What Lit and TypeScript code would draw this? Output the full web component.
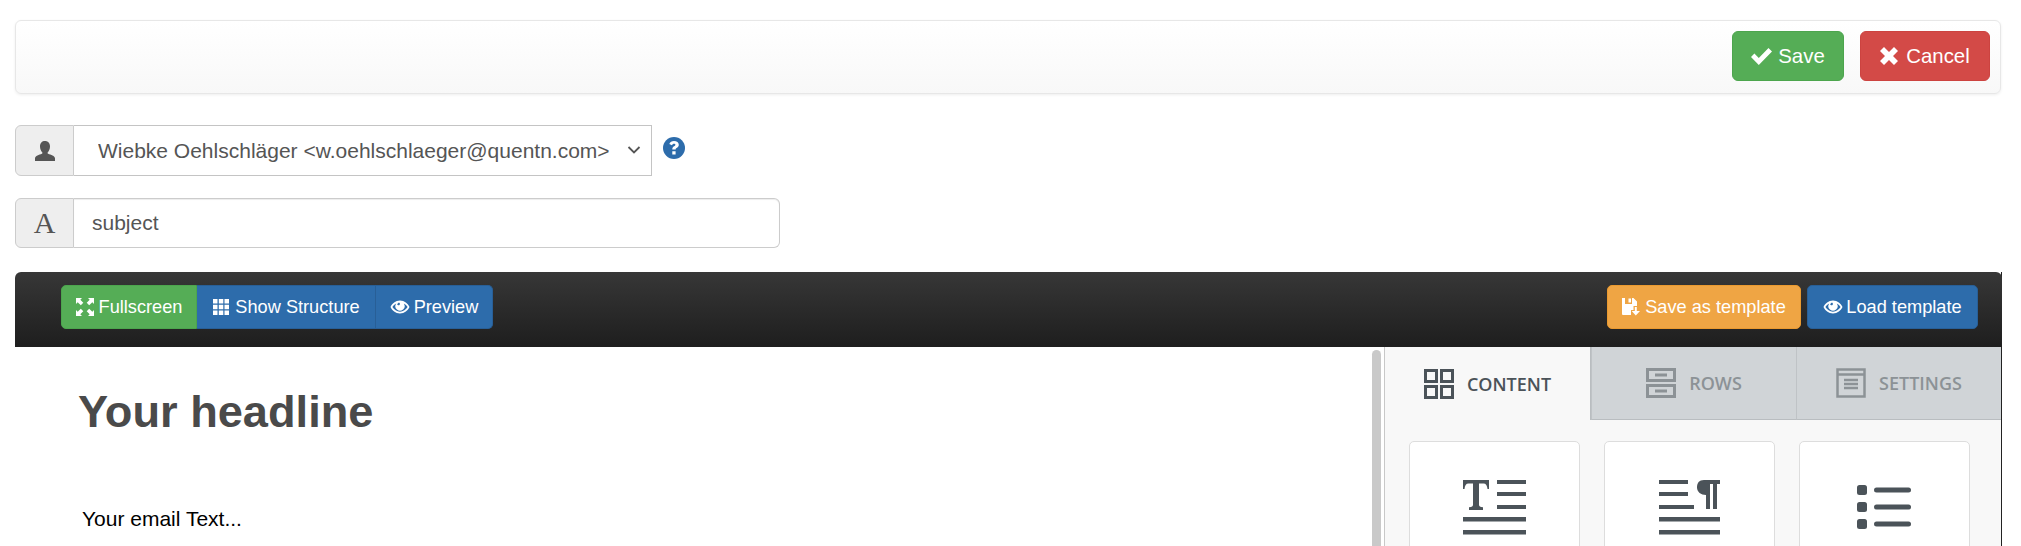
import { LitElement, html, css, svg } from "lit";
import { customElement } from "lit/decorators.js";

const eye = svg`<path fill-rule="evenodd" d="M10 3.500C5.600 3.500 2 6.600.5 10 2 13.400 5.600 16.500 10 16.500s8-3.100 9.500-6.500C18 6.600 14.400 3.500 10 3.500Zm0 11.200c-3.200 0-6-2-7.600-4.700.9-1.500 2.200-2.800 3.800-3.600A4.600 4.600 0 1 0 13.800 6.400c1.600.8 2.900 2.100 3.800 3.600-1.600 2.700-4.400 4.700-7.600 4.700Zm-1-9.100a1.400 1.400 0 1 1-1.800 1.800 3 3 0 0 1 1.800-1.800Z"/>`;

@customElement("app-root")
export class AppRoot extends LitElement {
  static styles = css`
    :host {
      display: block;
      height: 546px;
      overflow: hidden;
      background: #fff;
      font-family: "Liberation Sans", Arial, sans-serif;
      color: #555;
    }
    .page { padding: 20px 20px 0 15px; display: flex; flex-direction: column; }
    .topbar {
      height: 74px; box-sizing: border-box;
      border: 1px solid #e7e7e7; border-radius: 6px;
      background: linear-gradient(#fff, #f8f8f8);
      box-shadow: 0 1px 3px rgba(0,0,0,.07);
      display: flex; justify-content: flex-end; align-items: flex-start; gap: 16px; padding: 10px 10px 0 0;
    }
    .btn {
      box-sizing: border-box; border: 1px solid; border-radius: 6px; color: #fff;
      display: flex; align-items: center; justify-content: center; gap: 6px;
      font: 20.4px/1 "Liberation Sans", Arial, sans-serif; padding: 0;
    }
    .btn svg { fill: #fff; display: block; flex: none; }
    .big { height: 50px; }
    .save { width: 112px; background: #55ad56; border-color: #4ca54d; }
    .cancel { width: 130px; background: #d34a47; border-color: #cc4340; gap: 8px; }
    .group { display: flex; height: 51px; box-sizing: border-box; }
    .row1 { margin-top: 31px; align-items: stretch; }
    .row2 { margin-top: 22px; height: 50px; width: 765px; }
    .addon {
      width: 59px; box-sizing: border-box; flex: none;
      border: 1px solid #ccc; border-radius: 6px 0 0 6px;
      background: #eee; display: flex; align-items: center; justify-content: center; color: #555;
    }
    .addon svg { fill: #555; display: block; }
    .serif { font: 30px/1 "Liberation Serif", serif; color: #555; }
    .sel {
      width: 578px; box-sizing: border-box; appearance: none; -webkit-appearance: none; border: 1px solid #c4c4c4;
      border-left: none; border-radius: 0; background: #fff; color: #555; outline: none;
      font: 21px "Liberation Sans", Arial, sans-serif; padding: 0 0 0 24px; margin: 0;
    }
    .selwrap { position: relative; display: flex; }
    .chev { position: absolute; right: 11px; top: 20px; pointer-events: none; }
    .help { margin: 12px 0 0 11px; display: block; }
    .inp {
      flex: 1; min-width: 0; box-sizing: border-box; border: 1px solid #ccc; border-left: none; border-radius: 0 6px 6px 0;
      font: 21px "Liberation Sans", Arial, sans-serif; color: #555; padding: 0 0 0 18px; outline: none;
      box-shadow: inset 0 1px 1px rgba(0,0,0,.075); margin: 0;
    }
    .editor {
      margin-top: 24px; width: 1987px; box-sizing: border-box;
      border-right: 1px solid #222;
      height: 400px; display: flex; flex-direction: column;
    }
    .tools {
      height: 75px; flex: none; box-sizing: border-box;
      margin-right: -1px;
      border-radius: 6px 6px 0 0; background: linear-gradient(#373737, #1e1e1e);
      display: flex; justify-content: space-between; align-items: flex-start; padding: 13px 24px 0 46px;
    }
    .gr, .gr2 { display: flex; height: 44px; }
    .gr2 { gap: 6px; }
    .tb { height: 44px; font-size: 18.2px; gap: 5px; border-radius: 0; }
    .green { width: 136px; background: #55ad56; border-color: #4ca54d; border-radius: 5px 0 0 5px; }
    .blue { background: #2d6cab; border-color: #285f97; }
    .st { width: 179px; border-left: none; }
    .pv { width: 117px; border-left: none; border-radius: 0 5px 5px 0; gap: 4px; }
    .org { width: 194px; background: #efa544; border-color: #ea9a30; border-radius: 5px; }
    .lt { width: 171px; border-radius: 5px; gap: 3px; }
    .body { flex: 1; display: flex; min-height: 0; position: relative; }
    .main { flex: 1; padding: 0 0 0 63px; color: #000; min-width: 0; }
    h1 { margin: 0; padding-top: 38px; font: bold 45.2px/53px "Liberation Sans", Arial, sans-serif; color: #4a4a4a; }
    .main p { margin: 0; padding: 66px 0 0 4px; font: 21px/30px "Liberation Sans", Arial, sans-serif; color: #000; }
    .scroll { position: absolute; left: 1357px; top: 3px; bottom: 0; width: 9px; border-radius: 5px 5px 0 0; background: #c9c9c9; }
    .side { width: 617px; flex: none; box-sizing: border-box; border-left: 1px solid #c8c8c8; background: #f8f8f8; }
    .tabs { display: flex; height: 73px; }
    .tab {
      flex: 1; box-sizing: border-box; display: flex; align-items: center; justify-content: center; gap: 13px;
      font: 600 18px "Open Sans", sans-serif; color: #8c9296; background: #d0d4d7;
      border-bottom: 1px solid #b9bdc0; border-left: 1px solid #bfc3c6;
    }
    .tab svg { display: block; }
    .tab.on { color: #4b5359; background: #f8f8f8; border: none; border-right: 1px solid #b9bdc0; flex: none; width: 206px; }
    .cards { display: flex; gap: 24px; padding: 21px 0 0 24px; }
    .card {
      width: 171px; height: 120px; box-sizing: border-box; background: #fff; border: 1px solid #ddd; border-radius: 5px;
      display: flex; justify-content: center; padding-top: 36px;
    }
    .card svg { display: block; fill: #4b5359; }
  `;

  render() {
    return html`<div class="page">
      <div class="topbar">
        <button class="btn big save">
          <svg width="21" height="18" viewBox="0 0 21 18"><path d="M0 10l3.400-3.400 4.400 4.400L17.500 1 21 4.400 7.800 18z"/></svg>Save
        </button>
        <button class="btn big cancel">
          <svg width="18" height="18" viewBox="0 0 18 18"><path d="M0 4l4-4 5 5 5-5 4 4-5 5 5 5-4 4-5-5-5 5-4-4 5-5z"/></svg>Cancel
        </button>
      </div>

      <div class="group row1">
        <div class="addon">
          <svg width="22" height="22" viewBox="0 0 22 22"><path d="M11 1c3 0 5 2.200 5 5.500 0 2.400-1 4.500-2.200 5.800-.4.500-.3 1.200.3 1.500 2.700 1 6.900 2.200 6.900 4.500V21H1v-2.700c0-2.300 4.200-3.500 6.900-4.500.6-.3.700-1 .3-1.500C7 11 6 8.900 6 6.500 6 3 8 1 11 1z"/></svg>
        </div>
        <div class="selwrap">
          <select class="sel"><option>Wiebke Oehlschläger &lt;w.oehlschlaeger@quentn.com&gt;</option></select>
          <svg class="chev" width="14" height="10" viewBox="0 0 14 10"><path d="M1.500 2l5.500 5.500L12.500 2" fill="none" stroke="#555" stroke-width="1.800"/></svg>
        </div>
        <svg class="help" width="22" height="22" viewBox="0 0 22 22">
          <circle cx="11" cy="11" r="11" fill="#2d6cab"/>
          <path fill="#fff" d="M11 4c2.800 0 4.800 1.500 4.800 3.800 0 1.800-1.100 2.600-2.200 3.300-.7.400-1 .7-1 1.400H9.300c0-1.800.6-2.600 1.800-3.300.8-.5 1.300-.8 1.300-1.500 0-.6-.6-1-1.400-1-.9 0-1.600.5-2 1.500L6.300 7C7 5 8.700 4 11 4zM9.300 14.300h3.300v3.200H9.300z"/>
        </svg>
      </div>

      <div class="group row2">
        <div class="addon"><span class="serif">A</span></div>
        <input class="inp" value="subject" />
      </div>

      <div class="editor">
        <div class="tools">
          <div class="gr">
            <button class="btn tb green">
              <svg width="18" height="18" viewBox="0 0 18 18"><path d="M0 0h6L4.300 1.700 7.300 4.800 4.800 7.300 1.700 4.300 0 6zM18 0v6l-1.700-1.700-3.100 3L10.700 4.800l3-3.100L12 0zM0 18v-6l1.700 1.700 3.100-3 2.500 2.500-3 3.100L6 18zM18 18h-6l1.700-1.700-3-3.100 2.500-2.500 3.100 3L18 12z"/></svg>Fullscreen
            </button>
            <button class="btn tb blue st">
              <svg width="18" height="18" viewBox="0 0 18 18"><path d="M1 1h4.500v4.500H1zM6.800 1h4.500v4.500H6.800zM12.500 1H17v4.500h-4.500zM1 6.800h4.500v4.500H1zM6.800 6.800h4.500v4.500H6.800zM12.500 6.800H17v4.500h-4.500zM1 12.500h4.500V17H1zM6.800 12.500h4.500V17H6.800zM12.500 12.500H17V17h-4.500z"/></svg>Show Structure
            </button>
            <button class="btn tb blue pv">
              <svg width="20" height="20" viewBox="0 0 20 20">${eye}</svg>Preview
            </button>
          </div>
          <div class="gr2">
            <button class="btn tb org">
              <svg width="18" height="18" viewBox="0 0 18 18"><path fill-rule="evenodd" d="M0 0h3v6h7V0h1.500L15 3.500V8h-3.500v4H9v5H1a1 1 0 0 1-1-1zM6.500.5H9V4.500H6.500zM12.800 9h2v4H18l-4.200 4.500L9.700 13h3.100z"/></svg>Save as template
            </button>
            <button class="btn tb blue lt">
              <svg width="20" height="20" viewBox="0 0 20 20">${eye}</svg>Load template
            </button>
          </div>
        </div>
        <div class="body">
          <div class="main">
            <h1>Your headline</h1>
            <p>Your email Text...</p>
          </div>
          <div class="scroll"></div>
          <div class="side">
            <div class="tabs">
              <div class="tab on">
                <svg width="30" height="30" viewBox="0 0 30 30" fill="none" stroke="#4b5359" stroke-width="3"><path d="M1.500 1.500h11v11h-11zM17.500 1.500h11v11h-11zM1.500 17.500h11v11h-11zM17.500 17.500h11v11h-11z"/></svg>
                CONTENT
              </div>
              <div class="tab">
                <svg width="30" height="30" viewBox="0 0 30 30" fill="none" stroke="#8c9296" stroke-width="3"><path d="M1.500 1.500h27v11h-27zM1.500 17.500h27v11h-27zM9 7h12M9 23h12"/></svg>
                ROWS
              </div>
              <div class="tab">
                <svg width="30" height="30" viewBox="0 0 30 30" fill="none" stroke="#8c9296" stroke-width="2.500"><path d="M1.500 1.500h27v27h-27zM1.500 6.500h27M8 12h14M8 16h14M8 20h14"/></svg>
                SETTINGS
              </div>
            </div>
            <div class="cards">
              <div class="card">
                <svg width="63" height="57" viewBox="0 0 63 57"><path d="M0 2h26v9h-1.500c-.3-3.500-1.500-5.500-4-5.500H16v21c0 2 1 2.700 4 2.700V32H6v-2.800c3 0 4-.7 4-2.700V5.500H5.500c-2.500 0-3.700 2-4 5.500H0zM34 2h29v4H34zM34 14h29v4H34zM34 27h29v4H34zM0 39h63v4.500H0zM0 52h63v4.500H0z"/></svg>
              </div>
              <div class="card">
                <svg width="62" height="57" viewBox="0 0 62 57"><path d="M0 2h29v4H0zM0 14h29v4H0zM0 27h35v4H0zM0 39h61v4.500H0zM0 52h61v4.500H0zM45 2h16v4h-3v25h-4V6h-3v25h-4V17c-5 0-9-3-9-7.500S40 2 45 2z"/></svg>
              </div>
              <div class="card">
                <svg width="55" height="57" viewBox="0 0 55 57"><rect x="0" y="7" width="10" height="10" rx="2.500"/><rect x="0" y="24" width="10" height="10" rx="2.500"/><rect x="0" y="41" width="10" height="10" rx="2.500"/><rect x="17" y="9.500" width="37" height="5" rx="2.500"/><rect x="17" y="26.500" width="37" height="5" rx="2.500"/><rect x="17" y="43.500" width="37" height="5" rx="2.500"/></svg>
              </div>
            </div>
          </div>
        </div>
      </div>
    </div>`;
  }
}
